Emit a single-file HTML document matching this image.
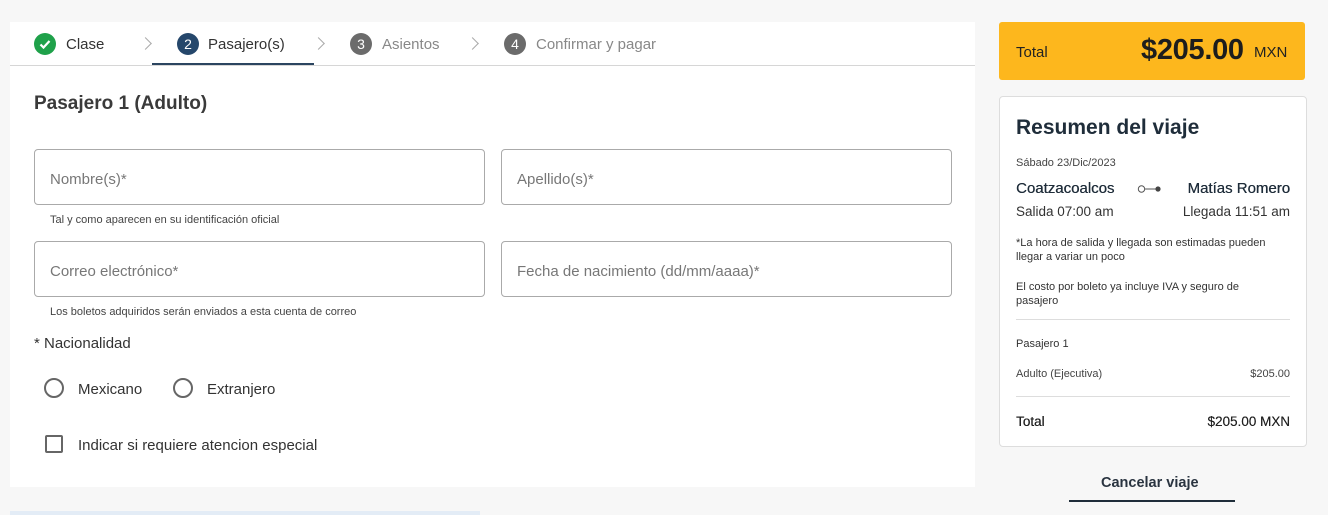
<!DOCTYPE html>
<html><head><meta charset="utf-8"><style>
*{margin:0;padding:0;box-sizing:border-box}
body{width:1328px;height:515px;background:#f7f7f7;font-family:"Liberation Sans",sans-serif;color:#333;position:relative;overflow:hidden}
.a{position:absolute;white-space:nowrap}
.panel{position:absolute;left:10px;top:22px;width:965px;height:465px;background:#fff}
.circ{position:absolute;width:22px;height:22px;border-radius:50%;color:#fff;font-size:14px;text-align:center;line-height:22px}
.step{font-size:15px;top:36px}
.chev{position:absolute;top:39px;width:9px;height:9px;border-right:1.5px solid #aaa;border-top:1.5px solid #aaa;transform:rotate(45deg)}
.inp{position:absolute;width:451px;height:56px;border:1px solid #aaa;border-radius:4px;font-size:15px;color:#777;padding:21px 0 0 15px}
.help{font-size:11px;color:#444}
.radio{position:absolute;width:20px;height:20px;border:2px solid #666;border-radius:50%}
.card{position:absolute;left:999px;top:96px;width:308px;height:351px;background:#fff;border:1px solid #ddd;border-radius:4px}
.r{position:absolute;right:38px;white-space:nowrap;text-align:right}
</style></head><body>
<div class="panel"></div>
<div class="a" style="left:10px;top:65px;width:965px;height:1px;background:#d6d6d6"></div>
<div class="a" style="left:152px;top:63px;width:162px;height:2px;background:#2b4560"></div>
<div class="circ" style="left:34px;top:33px;background:#1fa14a"><svg width="22" height="22" viewBox="0 0 22 22"><path d="M6.5 11.5l3 3 6-6.5" stroke="#fff" stroke-width="2.2" fill="none"/></svg></div>
<div class="a step" style="left:66px;color:#333">Clase</div>
<div class="chev" style="left:141px"></div>
<div class="circ" style="left:177px;top:33px;background:#25476b">2</div>
<div class="a step" style="left:208px;color:#333">Pasajero(s)</div>
<div class="chev" style="left:314px"></div>
<div class="circ" style="left:350px;top:33px;background:#6b6b6b">3</div>
<div class="a step" style="left:382px;color:#888">Asientos</div>
<div class="chev" style="left:468px"></div>
<div class="circ" style="left:504px;top:33px;background:#6b6b6b">4</div>
<div class="a step" style="left:536px;color:#888">Confirmar y pagar</div>

<div class="a" style="left:34px;top:93px;font-size:19px;font-weight:bold;color:#3a3a3a">Pasajero 1 (Adulto)</div>
<div class="inp" style="left:34px;top:149px">Nombre(s)*</div>
<div class="inp" style="left:501px;top:149px">Apellido(s)*</div>
<div class="a help" style="left:50px;top:214px">Tal y como aparecen en su identificación oficial</div>
<div class="inp" style="left:34px;top:241px">Correo electrónico*</div>
<div class="inp" style="left:501px;top:241px">Fecha de nacimiento (dd/mm/aaaa)*</div>
<div class="a help" style="left:50px;top:306px">Los boletos adquiridos serán enviados a esta cuenta de correo</div>
<div class="a" style="left:34px;top:335px;font-size:15px;color:#333">* Nacionalidad</div>
<div class="radio" style="left:44px;top:378px"></div>
<div class="a" style="left:78px;top:381px;font-size:15px">Mexicano</div>
<div class="radio" style="left:173px;top:378px"></div>
<div class="a" style="left:207px;top:381px;font-size:15px">Extranjero</div>
<div class="a" style="left:45px;top:435px;width:18px;height:18px;border:2px solid #666;border-radius:2px"></div>
<div class="a" style="left:78px;top:437px;font-size:15px">Indicar si requiere atencion especial</div>
<div class="a" style="left:10px;top:511px;width:470px;height:4px;background:#e3ecf6"></div>

<div class="a" style="left:999px;top:22px;width:306px;height:58px;background:#fdb71d;border-radius:3px"></div>
<div class="a" style="left:1016px;top:44px;font-size:15px;color:#222">Total</div>
<div class="a" style="left:1141px;top:34px;font-size:29px;font-weight:bold;color:#1d1d1d;letter-spacing:-0.3px">$205.00</div>
<div class="a" style="left:1254px;top:44px;font-size:15px;color:#222">MXN</div>

<div class="card"></div>
<div class="a" style="left:1016px;top:116px;font-size:21px;font-weight:bold;color:#1f2d3a">Resumen del viaje</div>
<div class="a" style="left:1016px;top:157px;font-size:11px;color:#444">Sábado 23/Dic/2023</div>
<div class="a" style="left:1016px;top:180px;font-size:15px;color:#1f2d3a;text-shadow:0.3px 0 0 #1f2d3a">Coatzacoalcos</div>
<svg class="a" style="left:1137px;top:184px" width="26" height="10"><circle cx="4.5" cy="5" r="3.2" fill="none" stroke="#555" stroke-width="1"/><line x1="8" y1="5" x2="20" y2="5" stroke="#555"/><circle cx="21" cy="5" r="2.6" fill="#444"/></svg>
<div class="r" style="top:180px;font-size:15px;color:#1f2d3a;text-shadow:0.3px 0 0 #1f2d3a">Matías Romero</div>
<div class="a" style="left:1016px;top:204px;font-size:13.5px;color:#333">Salida 07:00 am</div>
<div class="r" style="top:204px;font-size:13.5px;color:#333">Llegada 11:51 am</div>
<div class="a" style="left:1016px;top:236px;font-size:11px;line-height:14px;color:#333;white-space:normal;width:272px">*La hora de salida y llegada son estimadas pueden llegar a variar un poco</div>
<div class="a" style="left:1016px;top:280px;font-size:11px;line-height:14px;color:#333;white-space:normal;width:250px">El costo por boleto ya incluye IVA y seguro de pasajero</div>
<div class="a" style="left:1016px;top:319px;width:274px;height:1px;background:#ddd"></div>
<div class="a" style="left:1016px;top:338px;font-size:11px;color:#333">Pasajero 1</div>
<div class="a" style="left:1016px;top:368px;font-size:11px;color:#444">Adulto (Ejecutiva)</div>
<div class="r" style="top:368px;font-size:11px;color:#444">$205.00</div>
<div class="a" style="left:1016px;top:396px;width:274px;height:1px;background:#ddd"></div>
<div class="a" style="left:1016px;top:414px;font-size:13.5px;color:#222;text-shadow:0.2px 0 0 #222">Total</div>
<div class="r" style="top:414px;font-size:13.5px;color:#222;text-shadow:0.2px 0 0 #222">$205.00 MXN</div>
<div class="a" style="left:1101px;top:475px;font-size:14.5px;font-weight:bold;color:#2a3440">Cancelar viaje</div>
<div class="a" style="left:1069px;top:500px;width:166px;height:2px;background:#1f2d3a"></div>
</body></html>
